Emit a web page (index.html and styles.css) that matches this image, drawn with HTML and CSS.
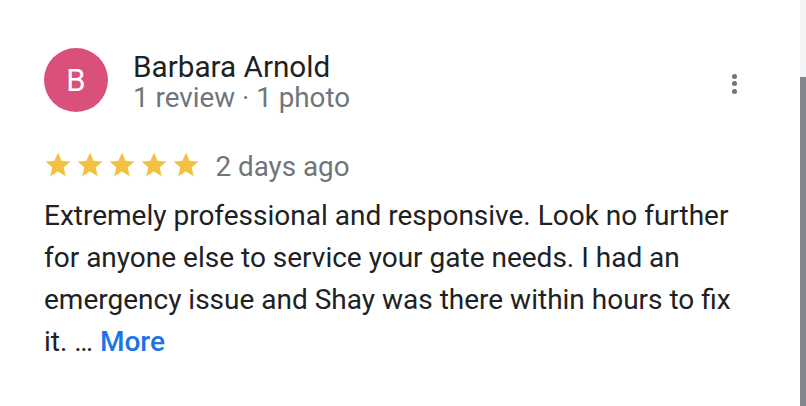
FILE: index.html
```html
<!DOCTYPE html>
<html>
<head>
<meta charset="utf-8">
<link rel="stylesheet" href="styles.css">
</head>
<body>
<div class="page">
  <div class="review">
    <div class="header">
      <div class="avatar">B</div>
      <div class="who">
        <div class="name">Barbara Arnold</div>
        <div class="meta">1 review · 1 photo</div>
      </div>
      <div class="menu"><span></span><span></span><span></span></div>
    </div>
    <div class="rating">
      <div class="stars">
        <svg viewBox="0 0 24 24"><path d="M12 17.27L18.18 21l-1.64-7.03L22 9.24l-7.19-.61L12 2 9.19 8.63 2 9.24l5.46 4.73L5.82 21z"/></svg>
        <svg viewBox="0 0 24 24"><path d="M12 17.27L18.18 21l-1.64-7.03L22 9.24l-7.19-.61L12 2 9.19 8.63 2 9.24l5.46 4.73L5.82 21z"/></svg>
        <svg viewBox="0 0 24 24"><path d="M12 17.27L18.18 21l-1.64-7.03L22 9.24l-7.19-.61L12 2 9.19 8.63 2 9.24l5.46 4.73L5.82 21z"/></svg>
        <svg viewBox="0 0 24 24"><path d="M12 17.27L18.18 21l-1.64-7.03L22 9.24l-7.19-.61L12 2 9.19 8.63 2 9.24l5.46 4.73L5.82 21z"/></svg>
        <svg viewBox="0 0 24 24"><path d="M12 17.27L18.18 21l-1.64-7.03L22 9.24l-7.19-.61L12 2 9.19 8.63 2 9.24l5.46 4.73L5.82 21z"/></svg>
      </div>
      <span class="date">2 days ago</span>
    </div>
    <p class="text">Extremely professional and responsive. Look no further for anyone else to service your gate needs. I had an emergency issue and Shay was there within hours to fix it. … <a class="more" href="#">More</a></p>
  </div>
  <div class="scrollbar"><div class="track"></div><div class="thumb"></div></div>
</div>
</body>
</html>
```
FILE: styles.css
```css
html, body { margin: 0; padding: 0; background: #fff; }
body { font-family: Roboto, "Liberation Sans", sans-serif; color: #202124; }
.page { display: flex; width: 806px; height: 406px; overflow: hidden; }
.review { flex: 1; padding: 48px 0 0 44px; min-width: 0; }
.header { display: flex; align-items: flex-start; }
.avatar {
  width: 64px; height: 64px; border-radius: 50%;
  background: #d9507a; color: #fff;
  display: flex; align-items: center; justify-content: center;
  font-size: 31px; flex: none;
}
.who { margin-left: 25px; flex: 1; padding-top: 3px; }
.name { font-size: 29.7px; line-height: 31.5px; color: #202124; }
.meta { font-size: 27.8px; line-height: 30px; color: #70757a; }
.menu { display: flex; flex-direction: column; gap: 2.5px; margin: 25.5px 63.5px 0 0; }
.menu span { width: 5px; height: 5px; border-radius: 50%; background: #70757a; }
.rating { display: flex; align-items: flex-start; margin-top: 37.5px; }
.stars { display: flex; gap: 2px; margin-left: -1.5px; }
.stars svg { width: 30px; height: 30px; fill: #f4c042; }
.date { font-size: 27.8px; line-height: 30px; color: #70757a; margin: 2px 0 0 15px; }
.text { font-size: 28px; line-height: 42px; margin: 13px 52px 0 0; color: #202124; }
.more { color: #1a73e8; font-weight: 500; text-decoration: none; }
.scrollbar { width: 6px; display: flex; flex-direction: column; }
.track { height: 77px; background: #f1f3f4; }
.thumb { flex: 1; background: #80868b; }
```
